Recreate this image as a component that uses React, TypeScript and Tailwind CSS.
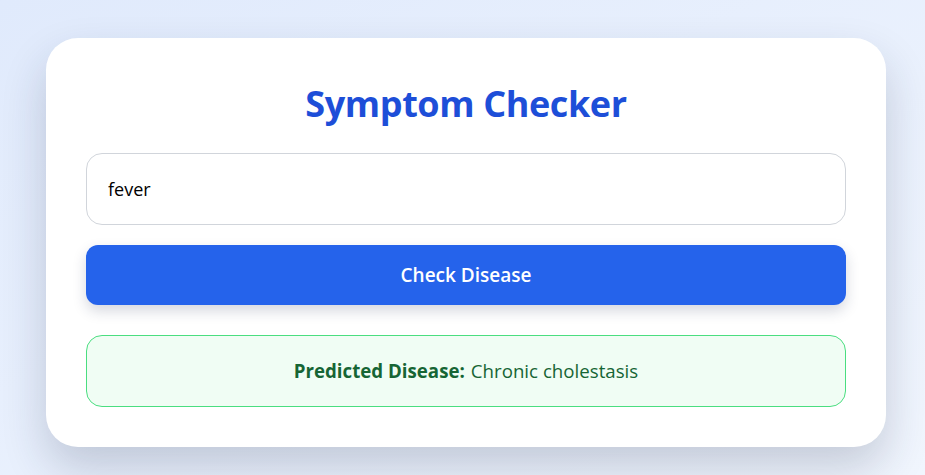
import { useState } from "react";

const App = () => {
  const [symptom, setSymptom] = useState("fever");

  return (
    <div
      className="min-h-screen w-full bg-gradient-to-br from-[#e0eafc] to-[#f1f6fe] px-[46px] pt-[38px]"
      style={{ fontFamily: '"Open Sans", "Noto Sans", sans-serif' }}
    >
      <div className="w-[840px] rounded-[32px] bg-white px-10 pt-10 pb-10 shadow-[0_22px_45px_rgba(30,41,70,0.2)]">
        <h1 className="mb-6 text-center text-[36px] leading-[51px] font-bold tracking-[-0.4px] text-[#1d4ed8]">
          Symptom Checker
        </h1>

        <input
          value={symptom}
          onChange={(e) => setSymptom(e.target.value)}
          className="block h-[72px] w-full rounded-2xl border border-[#d1d5db] px-[21px] text-lg text-black outline-none"
        />

        <button className="mt-5 flex h-[60px] w-full items-center justify-center rounded-xl bg-[#2563eb] text-[19px] font-semibold text-white shadow-[0_6px_14px_rgba(30,41,80,0.18)]">
          Check Disease
        </button>

        <div className="mt-[30px] flex h-[72px] items-center justify-center rounded-2xl border border-[#4ade80] bg-[#f0fdf4] text-[18.7px] text-[#166534]">
          <span className="font-bold">Predicted Disease:</span>
          <span className="ml-[6px]">Chronic cholestasis</span>
        </div>
      </div>
    </div>
  );
};

export default App;
